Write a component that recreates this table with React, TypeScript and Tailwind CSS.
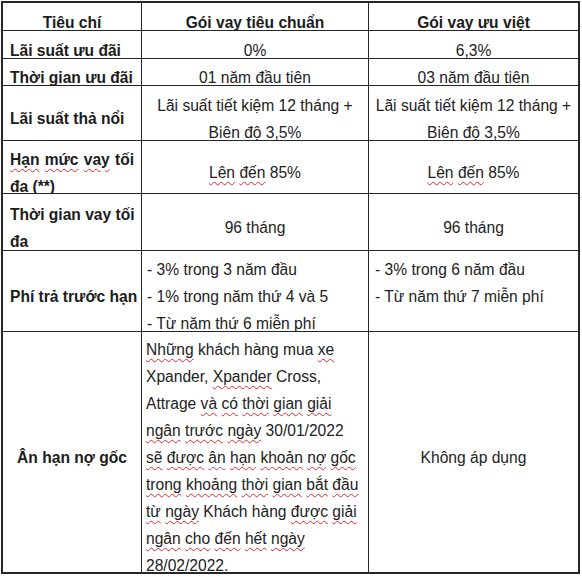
import type { ReactNode } from "react";

// spellcheck-style squiggle under a word
const W = ({ children, tone = "red" }: { children: ReactNode; tone?: "red" | "purple" }) => (
  <span
    className={
      tone === "red"
        ? "underline decoration-wavy decoration-[#e3262b] decoration-1 underline-offset-[3px]"
        : "underline decoration-wavy decoration-[#b44aa8] decoration-1 underline-offset-[3px]"
    }
  >
    {children}
  </span>
);

const Cell = ({ children, className = "" }: { children: ReactNode; className?: string }) => (
  <div className={`bg-white flex items-center pt-[11px] leading-[27px] ${className}`}>
    <div className="w-full">{children}</div>
  </div>
);

const Head = ({ children, className = "" }: { children: ReactNode; className?: string }) => (
  <Cell className={`font-bold px-[7px] text-[#1c1c1c] whitespace-nowrap ${className}`}>{children}</Cell>
);

const Mid = ({ children }: { children: ReactNode }) => (
  <Cell className="justify-center text-center">{children}</Cell>
);

const JustLine = ({ children }: { children: ReactNode }) => (
  <div className="text-justify [text-align-last:justify] whitespace-nowrap">{children}</div>
);

export default function App() {
  return (
    <div className="min-h-screen bg-white text-[#222] text-[15.6px] font-['Liberation_Sans',Arial,sans-serif]">
      <div className="ml-px mt-px w-fit grid grid-cols-[138px_226px_209px] grid-rows-[27px_27px_26px_54px_52px_56px_80px_240px] gap-px bg-[#262626] border-2 border-[#262626]">
        {/* header */}
        <Head className="text-center">Tiêu chí</Head>
        <Cell className="font-bold text-center text-[#1c1c1c]">Gói vay tiêu chuẩn</Cell>
        <Cell className="font-bold text-center text-[#1c1c1c]">Gói vay ưu việt</Cell>

        <Head>Lãi suất ưu đãi</Head>
        <Mid>0%</Mid>
        <Mid>6,3%</Mid>

        <Head>Thời gian ưu đãi</Head>
        <Mid>01 năm đầu tiên</Mid>
        <Mid>03 năm đầu tiên</Mid>

        <Head>Lãi suất thả nổi</Head>
        <Mid>
          <div>Lãi suất tiết kiệm 12 tháng +</div>
          <div>Biên độ 3,5%</div>
        </Mid>
        <Mid>
          <div>Lãi suất tiết kiệm 12 tháng +</div>
          <div>Biên độ 3,5%</div>
        </Mid>

        <Head>
          <JustLine>
            <W>Hạn</W> <W>mức</W> <W>vay</W> tối
          </JustLine>
          <div>đa (**)</div>
        </Head>
        <Mid>
          <W>Lên</W> <W>đến</W> 85%
        </Mid>
        <Mid>
          <W>Lên</W> <W>đến</W> 85%
        </Mid>

        <Head>
          <JustLine>Thời gian vay tối</JustLine>
          <div>đa</div>
        </Head>
        <Mid>96 tháng</Mid>
        <Mid>96 tháng</Mid>

        <Head>Phí trả trước hạn</Head>
        <Cell className="pl-[5px] whitespace-nowrap">
          <div>- 3% trong 3 năm đầu</div>
          <div>- 1% trong năm thứ 4 và 5</div>
          <div>- Từ năm thứ 6 miễn phí</div>
        </Cell>
        <div className="bg-white pt-[5px] pl-[6px] leading-[27px] whitespace-nowrap">
          <div>- 3% trong 6 năm đầu</div>
          <div>- Từ năm thứ 7 miễn phí</div>
        </div>

        <Head className="text-center">Ân hạn nợ gốc</Head>
        <Cell className="pl-[4px] whitespace-nowrap">
          <div>
            <W>Những</W> khách hàng mua <W>xe</W>
          </div>
          <div>
            Xpander, <W>Xpander</W> Cross,
          </div>
          <div>
            Attrage <W>và</W> <W>có</W> <W>thời</W> <W>gian</W> <W>giải</W>
          </div>
          <div>
            <W>ngân</W> <W>trước</W> <W>ngày</W> 30/01/2022
          </div>
          <div>
            <W>sẽ</W> <W>được</W> <W tone="purple">ân</W> <W>hạn</W> <W>khoản</W> <W>nợ</W> <W>gốc</W>
          </div>
          <div>
            <W>trong</W> <W>khoảng</W> <W>thời</W> <W>gian</W> <W>bắt</W> <W>đầu</W>
          </div>
          <div>
            <W>từ</W> <W>ngày</W> Khách hàng <W>được</W> <W>giải</W>
          </div>
          <div>
            <W>ngân</W> <W>cho</W> <W>đến</W> <W>hết</W> <W>ngày</W>
          </div>
          <div>28/02/2022.</div>
        </Cell>
        <Mid>Không áp dụng</Mid>
      </div>
    </div>
  );
}
